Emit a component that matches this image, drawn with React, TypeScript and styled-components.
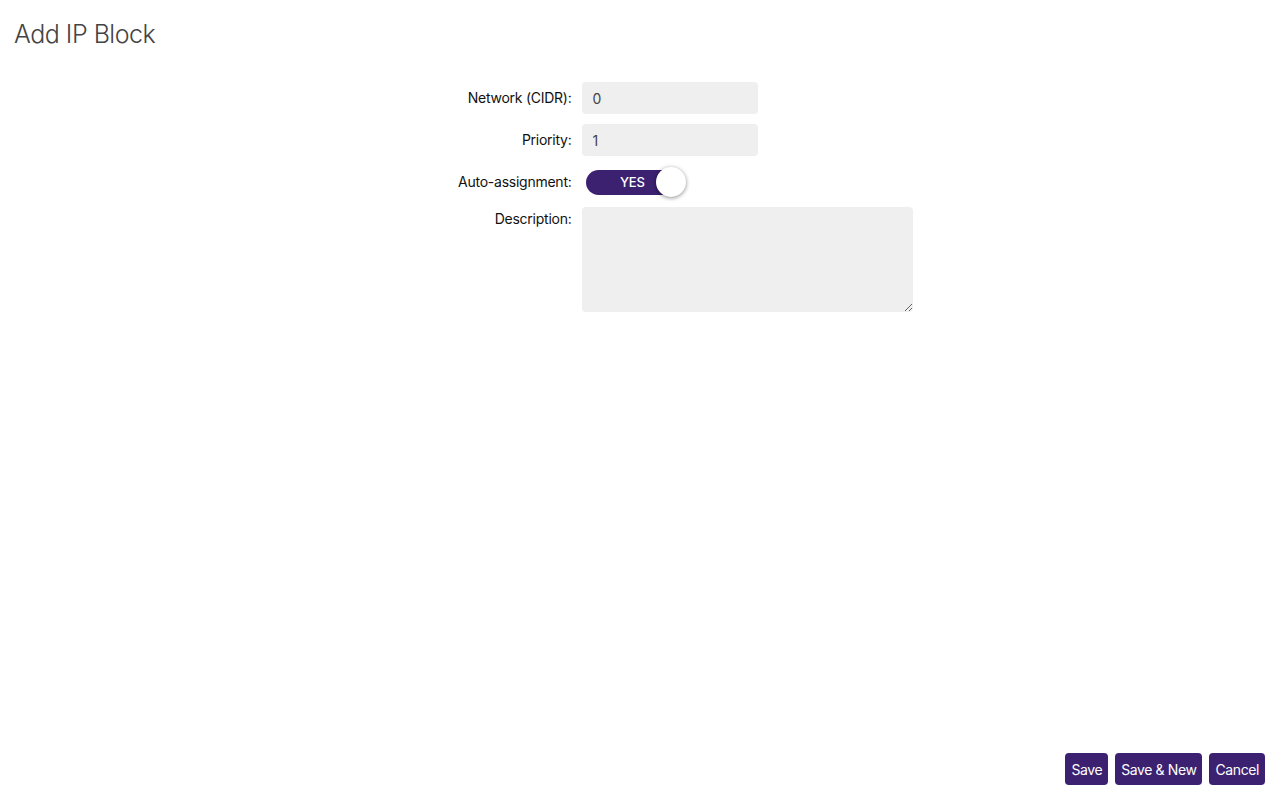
import React, { useState } from "react";
import styled, { createGlobalStyle } from "styled-components";

const GlobalStyle = createGlobalStyle`
  html, body { margin: 0; padding: 0; background: #fff; }
  body { font-family: Inter, "Noto Sans", sans-serif; color: #111; }
  * { box-sizing: border-box; }
`;

const Page = styled.div`
  height: 800px;
  display: flex;
  flex-direction: column;
  padding: 0 15px 15px 14px;
`;

const Title = styled.h1`
  margin: 18px 0 0 0;
  font-size: 25px;
  line-height: 32px;
  font-weight: 300;
  color: #444;
  letter-spacing: -0.5px;
`;

const Form = styled.div`
  align-self: center;
  margin-top: 32px;
  display: grid;
  grid-template-columns: 204px 330px;
  column-gap: 10px;
  row-gap: 10px;
`;

const Label = styled.label<{ $top?: boolean }>`
  justify-self: end;
  font-size: 14px;
  line-height: ${(p) => (p.$top ? "22px" : "32px")};
  color: #111;
  letter-spacing: -0.25px;
`;

const TextInput = styled.input`
  width: 176px;
  height: 32px;
  border: none;
  border-radius: 4px;
  background: #efefef;
  padding: 0 11px;
  font-family: inherit;
  font-size: 14px;
  color: #444;
  outline: none;
`;

const TextArea = styled.textarea`
  width: 331px;
  height: 105px;
  margin-top: -1px;
  border: none;
  border-radius: 4px;
  background: #efefef;
  padding: 8px 11px;
  font-family: inherit;
  font-size: 14px;
  color: #444;
  outline: none;
`;

const ToggleCell = styled.div`
  height: 32px;
  display: flex;
  align-items: center;
  padding-left: 4px;
`;

const Track = styled.button<{ $on: boolean }>`
  position: relative;
  width: 96px;
  height: 25px;
  border: none;
  border-radius: 13px;
  background: ${(p) => (p.$on ? "#3b2170" : "#bbb")};
  color: #fff;
  font-family: inherit;
  font-size: 13px;
  font-weight: 500;
  padding: 0 36px 0 0;
  text-align: right;
  cursor: pointer;
`;

const TrackText = styled.span`
  display: inline-block;
  padding-right: 1px;
  letter-spacing: -0.3px;
`;

const Knob = styled.span<{ $on: boolean }>`
  position: absolute;
  top: -3px;
  left: ${(p) => (p.$on ? "70px" : "-4px")};
  width: 30px;
  height: 30px;
  border-radius: 50%;
  background: #fff;
  box-shadow: 0 1px 4px rgba(0, 0, 0, 0.45);
`;

const Spacer = styled.div`
  flex: 1;
`;

const Footer = styled.div`
  display: flex;
  justify-content: flex-end;
  gap: 7px;
`;

const Button = styled.button`
  height: 32px;
  padding: 0 6px;
  border: none;
  border-radius: 4px;
  background: #3b2170;
  color: #fff;
  font-family: inherit;
  font-size: 14px;
  letter-spacing: -0.4px;
  cursor: pointer;
`;

export default function App() {
  const [on, setOn] = useState(true);
  return (
    <>
      <GlobalStyle />
      <Page>
        <Title>Add IP Block</Title>
        <Form>
          <Label>Network (CIDR):</Label>
          <TextInput defaultValue="0" />
          <Label>Priority:</Label>
          <TextInput defaultValue="1" />
          <Label>Auto-assignment:</Label>
          <ToggleCell>
            <Track $on={on} onClick={() => setOn(!on)}>
              <TrackText>{on ? "YES" : "NO"}</TrackText>
              <Knob $on={on} />
            </Track>
          </ToggleCell>
          <Label $top>Description:</Label>
          <TextArea />
        </Form>
        <Spacer />
        <Footer>
          <Button>Save</Button>
          <Button>Save &amp; New</Button>
          <Button>Cancel</Button>
        </Footer>
      </Page>
    </>
  );
}
